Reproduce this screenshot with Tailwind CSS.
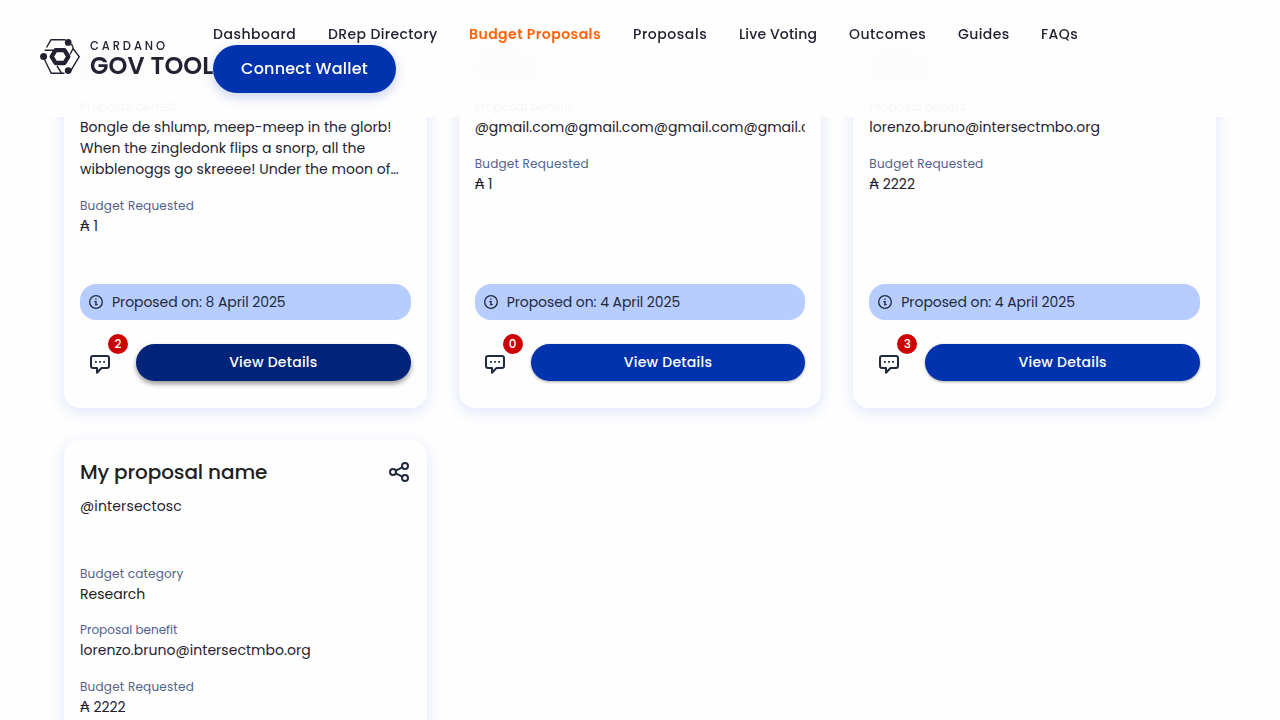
<!DOCTYPE html>
<html lang="en">
<head>
<meta charset="utf-8">
<title>Cardano GovTool - Budget Proposals</title>
<script src="https://cdn.jsdelivr.net/npm/@tailwindcss/browser@4"></script>
</head>
<body class="h-[720px] overflow-hidden bg-[#fefefe] font-['Poppins','Inter',sans-serif] text-sm text-[#242232]">

<svg class="hidden">
  <symbol id="info" viewBox="0 0 24 24"><circle cx="12" cy="12" r="9.500" fill="none" stroke="currentColor" stroke-width="2"/><path d="M9.500 10.500H13V15h1.500v2h-4v-2H11v-2.500H9.500zM10.800 6.800h2.200v2h-2.200z" fill="currentColor"/></symbol>
  <symbol id="chat" viewBox="0 0 24 24"><path d="M5 4h14a2 2 0 0 1 2 2v8a2 2 0 0 1-2 2h-5.500L9 20.800V16H5a2 2 0 0 1-2-2V6a2 2 0 0 1 2-2Z" fill="none" stroke="currentColor" stroke-width="2" stroke-linejoin="round"/><path d="M7 9h1.800v1.800H7zM11.100 9h1.800v1.800h-1.800zM15.200 9H17v1.800h-1.800z" fill="currentColor"/></symbol>
  <symbol id="share" viewBox="0 0 24 24"><g fill="none" stroke="currentColor" stroke-width="2"><circle cx="18" cy="6" r="3"/><circle cx="6" cy="12" r="3"/><circle cx="18" cy="18" r="3"/><path d="m8.700 10.700 6.600-3.400M8.700 13.300l6.600 3.400"/></g></symbol>
</svg>

<header class="fixed inset-x-0 top-0 z-10 h-[117px]">
  <div class="absolute inset-0 backdrop-blur-[10px] [mask-image:linear-gradient(black_82%,transparent_100%)]"></div>
  <div class="absolute inset-0 bg-[#fefefe]/92"></div>
  <div class="relative flex h-full items-start pt-6 pl-10">
    <div class="mt-[15px] flex w-[173px] shrink-0 gap-[10px]">
      <svg class="h-[35px] w-10 shrink-0" viewBox="0 0 40 35" fill="none" stroke="#242232" stroke-width="1.400">
        <path d="M6.500 8.500 11 .8h14.500M4.500 11.200h8.500M31.500 5l1.500 3.500M33 9.500l6.200 8.100-8.700 14.500M33.500 8.500l-3.500 7M4.500 20.500l6.700 13.700h13.300M17 27l4.500 7"/>
        <path d="M15.500 11.200h9l3.800 6.400-3.800 6.400h-9l-3.800-6.400Z" stroke-width="4.300" stroke-linejoin="round"/>
        <g fill="#242232" stroke="none"><circle cx="28.200" cy="3.400" r="3.400"/><circle cx="3.600" cy="17.500" r="3.500"/><circle cx="28.200" cy="31.600" r="3.400"/></g>
      </svg>
      <div class="flex flex-col whitespace-nowrap">
        <span class="mt-[1px] text-[11.500px] leading-[13px] font-medium tracking-[2.900px]">CARDANO</span>
        <span class="mt-px text-2xl leading-6 font-semibold tracking-[0.100px]">GOV TOOL</span>
      </div>
    </div>
    <div class="relative">
      <nav class="flex h-[21px] gap-8 whitespace-nowrap leading-[21px] font-medium">
        <a class="w-[83px] tracking-[0.5px]">Dashboard</a><a class="w-[109px] tracking-[0.37px]">DRep Directory</a><a class="w-[132px] font-semibold tracking-[0.45px] text-[#ff640a]">Budget Proposals</a><a class="w-[74px] tracking-[0.55px]">Proposals</a><a class="w-[78px] tracking-[0.15px]">Live Voting</a><a class="w-[77px] tracking-[0.5px]">Outcomes</a><a class="w-[51px] tracking-[0.4px]">Guides</a><a class="w-[37px] tracking-[0.4px]">FAQs</a>
      </nav>
      <button class="flex h-12 w-[183px] items-center justify-center rounded-full bg-[#0033ad] text-base font-medium tracking-[0.2px] text-white shadow-[0_4px_12px_rgba(0,51,173,.22)]">Connect Wallet</button>
    </div>
  </div>
</header>

<main id="cards" class="-mt-[83px] grid grid-cols-3 gap-8 px-16"></main>

<template id="card">
  <article class="flex h-[491px] min-w-0 flex-col rounded-2xl bg-[#fefefe] p-4 shadow-[0_4px_15px_rgba(47,98,220,.16)]">
    <div class="flex h-8 items-center justify-between">
      <h2 data-f="title" class="text-xl font-medium tracking-[-0.12px] text-[#212121]"></h2>
      <svg class="size-6 text-[#212a3d]"><use href="#share"/></svg>
    </div>
    <p data-f="author" class="mt-2 h-[68px] leading-[21px] tracking-[0.15px]"></p>
    <div class="mb-[15px]">
      <p class="text-xs leading-[19.9px] tracking-[0.2px] text-[#506288]">Budget category</p>
      <p data-f="category" class="leading-[21px] text-[#212121]"></p>
    </div>
    <div class="mb-4">
      <p class="text-xs leading-[19.9px] text-[#506288]">Proposal benefit</p>
      <p data-f="benefit" class="line-clamp-3 overflow-hidden leading-[21px] tracking-[0.035px]"></p>
    </div>
    <div>
      <p class="text-xs leading-[19.9px] tracking-[0.23px] text-[#506288]">Budget Requested</p>
      <p data-f="budget" class="leading-[21px]"></p>
    </div>
    <div class="mt-auto flex h-9 items-center gap-2 rounded-2xl bg-[#b8cdff] px-2 text-[#212a3d]">
      <svg class="size-4"><use href="#info"/></svg>
      <span class="tracking-[-0.08px]">Proposed on: <span data-f="date"></span></span>
    </div>
    <div class="mt-6 mb-[11px] flex h-[37px] gap-4">
      <div class="relative w-10 shrink-0 pt-2 pl-2 text-[#212a3d]">
        <svg class="size-6"><use href="#chat"/></svg>
        <span data-f="count" class="absolute -top-[10px] left-7 flex size-5 items-center justify-center rounded-full bg-[#cc0000] text-xs font-medium text-white"></span>
      </div>
      <button class="flex-1 rounded-full bg-[#0033ad] pb-[2px] font-medium tracking-[0.25px] text-white shadow-[0_1px_3px_rgba(0,0,0,.35)]">View Details</button>
    </div>
  </article>
</template>

<script>
  const cards = [
    { title: "Proposal", author: "@bongle", category: "Research", benefit: "Bongle de shlump, meep-meep in the glorb! When the zingledonk flips a snorp, all the wibblenoggs go skreeee! Under the moon of the great snorp, all the wibblenoggs dance", budget: "₳ 1", date: "8 April 2025", count: 2, hover: true },
    { title: "Proposal", author: "@gmail", category: "Research", benefit: "@gmail.com".repeat(5), budget: "₳ 1", date: "4 April 2025", count: 0 },
    { title: "Proposal", author: "@intersectosc", category: "Research", benefit: "lorenzo.bruno@intersectmbo.org", budget: "₳ 2222", date: "4 April 2025", count: 3 },
    { title: "My proposal name", author: "@intersectosc", category: "Research", benefit: "lorenzo.bruno@intersectmbo.org", budget: "₳ 2222", date: "4 April 2025", count: 0 },
  ];
  const tpl = document.getElementById("card"), grid = document.getElementById("cards");
  for (const c of cards) {
    const n = tpl.content.cloneNode(true);
    n.querySelectorAll("[data-f]").forEach(e => { e.textContent = c[e.dataset.f]; });
    if (c.hover) {
      const b = n.querySelector("button");
      b.classList.remove("bg-[#0033ad]", "shadow-[0_1px_3px_rgba(0,0,0,.35)]");
      b.classList.add("bg-[#00247a]", "shadow-[0_3px_5px_rgba(0,0,0,.4)]");
    }
    grid.append(n);
  }
</script>
</body>
</html>
